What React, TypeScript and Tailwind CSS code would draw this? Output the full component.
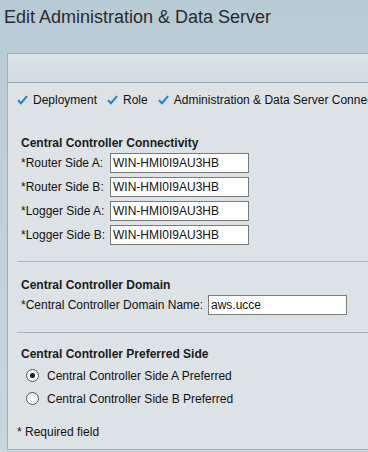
import { useState } from 'react';

const hosts = [
  { label: '*Router Side A:', value: 'WIN-HMI0I9AU3HB' },
  { label: '*Router Side B:', value: 'WIN-HMI0I9AU3HB' },
  { label: '*Logger Side A:', value: 'WIN-HMI0I9AU3HB' },
  { label: '*Logger Side B:', value: 'WIN-HMI0I9AU3HB' },
];

function Check() {
  return (
    <svg width="11" height="10" viewBox="0 0 11 10" className="shrink-0">
      <path d="M1 5.2 L4 8.2 L10 1.2" fill="none" stroke="#1b86c4" strokeWidth="2" />
    </svg>
  );
}

function Radio({ checked, onClick }: { checked: boolean; onClick: () => void }) {
  return (
    <span
      onClick={onClick}
      className="relative inline-block w-[13px] h-[13px] rounded-full border border-[#555] bg-gradient-to-b from-[#f3f3f3] to-white shrink-0"
    >
      {checked && <span className="absolute left-[3px] top-[3px] w-[5px] h-[5px] rounded-full bg-[#1a1a1a]" />}
    </span>
  );
}

export default function App() {
  const [side, setSide] = useState('A');

  return (
    <div
      className="w-[368px] h-[452px] overflow-hidden bg-gradient-to-b from-[#b7cbd6] to-[#c9d6de] text-[12px] text-[#111]"
      style={{ fontFamily: '"Liberation Sans", Arial, sans-serif' }}
    >
      <div className="h-[53px] pl-[4px] pt-[6px] text-[18px] leading-[22px] text-[#2a2a2a]">
        Edit Administration &amp; Data Server
      </div>

      <div className="ml-[7px] h-[397px] border-l border-t border-b border-[#9fb0ba] bg-[#dde2e6]">
        <div className="h-[29px] bg-gradient-to-b from-[#d9e3e8] to-[#d1dce3] border-b border-[#97a9b4]" />

        <div className="pl-[9px]">
          <div className="flex items-center gap-[5px] pt-[10px] h-[24px] whitespace-nowrap">
            <Check />
            <span>Deployment</span>
            <span className="w-[1px]" />
            <Check />
            <span>Role</span>
            <span className="w-[1px]" />
            <Check />
            <span>Administration &amp; Data Server Connectivity</span>
          </div>

          <div className="pl-[4px] pt-[29px]">
            <div className="font-bold leading-[14px] text-[#1a1a1a]">Central Controller Connectivity</div>
            <div className="mt-[3px] flex flex-col gap-[4px]">
              {hosts.map((h) => (
                <div key={h.label} className="flex items-center h-[20px]">
                  <span className="w-[89px] whitespace-nowrap">{h.label}</span>
                  <input
                    defaultValue={h.value}
                    className="w-[139px] h-[20px] border border-[#7a7a7a] bg-white px-[2px] text-[12px] text-[#111] outline-none"
                  />
                </div>
              ))}
            </div>
          </div>

          <div className="mt-[16px] border-t border-[#aab4bb]" />

          <div className="pl-[4px] pt-[16px]">
            <div className="font-bold leading-[14px] text-[#1a1a1a]">Central Controller Domain</div>
            <div className="mt-[3px] flex items-center h-[20px]">
              <span className="w-[187px] whitespace-nowrap">*Central Controller Domain Name:</span>
              <input
                defaultValue="aws.ucce"
                className="w-[139px] h-[20px] border border-[#7a7a7a] bg-white px-[2px] text-[12px] text-[#111] outline-none"
              />
            </div>
          </div>

          <div className="mt-[17px] border-t border-[#aab4bb]" />

          <div className="pl-[4px] pt-[14px]">
            <div className="font-bold leading-[14px] text-[#1a1a1a]">Central Controller Preferred Side</div>
            <div className="mt-[8px] pl-[5px] flex flex-col gap-[10px]">
              <label className="flex items-center gap-[8px] h-[13px]">
                <Radio checked={side === 'A'} onClick={() => setSide('A')} />
                <span>Central Controller Side A Preferred</span>
              </label>
              <label className="flex items-center gap-[8px] h-[13px]">
                <Radio checked={side === 'B'} onClick={() => setSide('B')} />
                <span>Central Controller Side B Preferred</span>
              </label>
            </div>
          </div>

          <div className="pt-[20px] leading-[14px]">* Required field</div>
        </div>
      </div>
    </div>
  );
}
